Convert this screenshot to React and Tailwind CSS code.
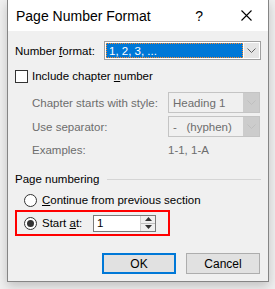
import React from 'react';

const font = { fontFamily: '"Liberation Sans", Arial, sans-serif' };

const Chevron = ({ color = '#606060' }) => (
  <svg width="9" height="5" viewBox="0 0 9 5">
    <polyline points="0.5,0.5 4.5,4.5 8.5,0.5" fill="none" stroke={color} strokeWidth="1" />
  </svg>
);

const DisabledCombo = ({ value }) => (
  <div className="flex h-[21px] w-[92px] shrink-0 border border-[#c4c4c4] bg-[#f0f0f0]">
    <div className="flex flex-1 items-center pl-[4px] text-[#6d6d6d]">{value}</div>
    <div className="flex w-[16px] items-center justify-center bg-[#cccccc]">
      <Chevron color="#bfbfbf" />
    </div>
  </div>
);

const Radio = ({ checked }) => (
  <div className="flex h-[13px] w-[13px] shrink-0 items-center justify-center rounded-full border border-[#333] bg-white">
    {checked && <div className="h-[7px] w-[7px] rounded-full bg-[#333]"></div>}
  </div>
);

const App = () => {
  return (
    <div className="h-[289px] w-[275px] overflow-hidden whitespace-nowrap bg-[#f0f0f0] pl-[7px] text-[11.5px] leading-[16px] text-black" style={font}>
      <div className="flex h-[282px] w-[262px] flex-col border-x border-b border-[#858585] bg-[#f0f0f0] shadow-[0_4px_10px_rgba(0,0,0,0.2)]">
        {/* Title bar */}
        <div className="flex h-[31px] shrink-0 items-center bg-white">
          <span className="pl-[8px] text-[14px] leading-none">Page Number Format</span>
          <span className="ml-auto text-[14px] leading-none">?</span>
          <svg className="ml-[38px] mr-[16px]" width="11" height="11" viewBox="0 0 11 11">
            <path d="M0.5 0.5 L10.5 10.5 M10.5 0.5 L0.5 10.5" stroke="#000" strokeWidth="1.1" />
          </svg>
        </div>

        {/* Body */}
        <div className="flex flex-col px-[7px]">
          <div className="mt-[10px] flex h-[19px] items-center">
            <span className="w-[89px] shrink-0">
              Number <span className="underline">f</span>ormat:
            </span>
            <div className="flex h-[19px] w-[157px] shrink-0 border border-[#a0a0a0] bg-white p-px">
              <div className="flex flex-1 items-center border border-dotted border-[#ff8a28] bg-[#0078d7] pl-[2px] text-white">
                1, 2, 3, ...
              </div>
              <div className="ml-px flex w-[15px] items-center justify-center bg-[#e5e5e5]">
                <Chevron />
              </div>
            </div>
          </div>

          <div className="mt-[8px] flex h-[16px] items-center gap-[4px]">
            <div className="h-[13px] w-[13px] shrink-0 border border-[#333] bg-white"></div>
            <span>
              Include chapter <span className="underline">n</span>umber
            </span>
          </div>

          <div className="mt-[8px] flex flex-col gap-[3px] pl-[17px] text-[#6d6d6d]">
            <div className="flex items-center">
              <span className="w-[136px] shrink-0">Chapter starts with style:</span>
              <DisabledCombo value="Heading 1" />
            </div>
            <div className="flex items-center">
              <span className="w-[136px] shrink-0">Use separator:</span>
              <DisabledCombo value={<span className="whitespace-pre">-   (hyphen)</span>} />
            </div>
            <div className="mt-[2px] flex h-[16px] items-center">
              <span className="w-[136px] shrink-0">Examples:</span>
              <span>1-1, 1-A</span>
            </div>
          </div>

          <div className="mt-[13px] flex h-[16px] items-center">
            <span>Page numbering</span>
            <div className="ml-[8px] h-px flex-1 bg-[#d5d5d5]"></div>
          </div>

          <div className="mt-[5px] flex h-[16px] items-center gap-[5px] pl-[9px]">
            <Radio />
            <span>
              <span className="underline">C</span>ontinue from previous section
            </span>
          </div>

          <div className="mt-[2px] flex h-[26px] w-[155px] items-center border-2 border-[#ff0000] pl-[7px]">
            <Radio checked />
            <span className="ml-[5px] w-[51px] shrink-0">
              Start <span className="underline">a</span>t:
            </span>
            <div className="flex h-[17px] w-[63px] shrink-0 border border-[#7a7a7a] bg-white">
              <div className="flex flex-1 items-center pl-[3px]">1</div>
              <div className="flex w-[15px] flex-col border-l border-[#d0d0d0] bg-[#f0f0f0]">
                <div className="flex flex-1 items-center justify-center border-b border-[#c0c0c0]">
                  <svg width="7" height="4" viewBox="0 0 7 4"><polygon points="0,4 7,4 3.5,0" fill="#333" /></svg>
                </div>
                <div className="flex flex-1 items-center justify-center">
                  <svg width="7" height="4" viewBox="0 0 7 4"><polygon points="0,0 7,0 3.5,4" fill="#333" /></svg>
                </div>
              </div>
            </div>
          </div>

          <div className="mt-[17px] flex justify-end gap-[10px] pr-[1px]">
            <button className="h-[21px] w-[74px] border-2 border-[#0078d7] bg-[#e1e1e1] text-[12px]">OK</button>
            <button className="h-[21px] w-[74px] border border-[#adadad] bg-[#e1e1e1] text-[12px]">Cancel</button>
          </div>
        </div>
      </div>
    </div>
  );
};

export default App;
